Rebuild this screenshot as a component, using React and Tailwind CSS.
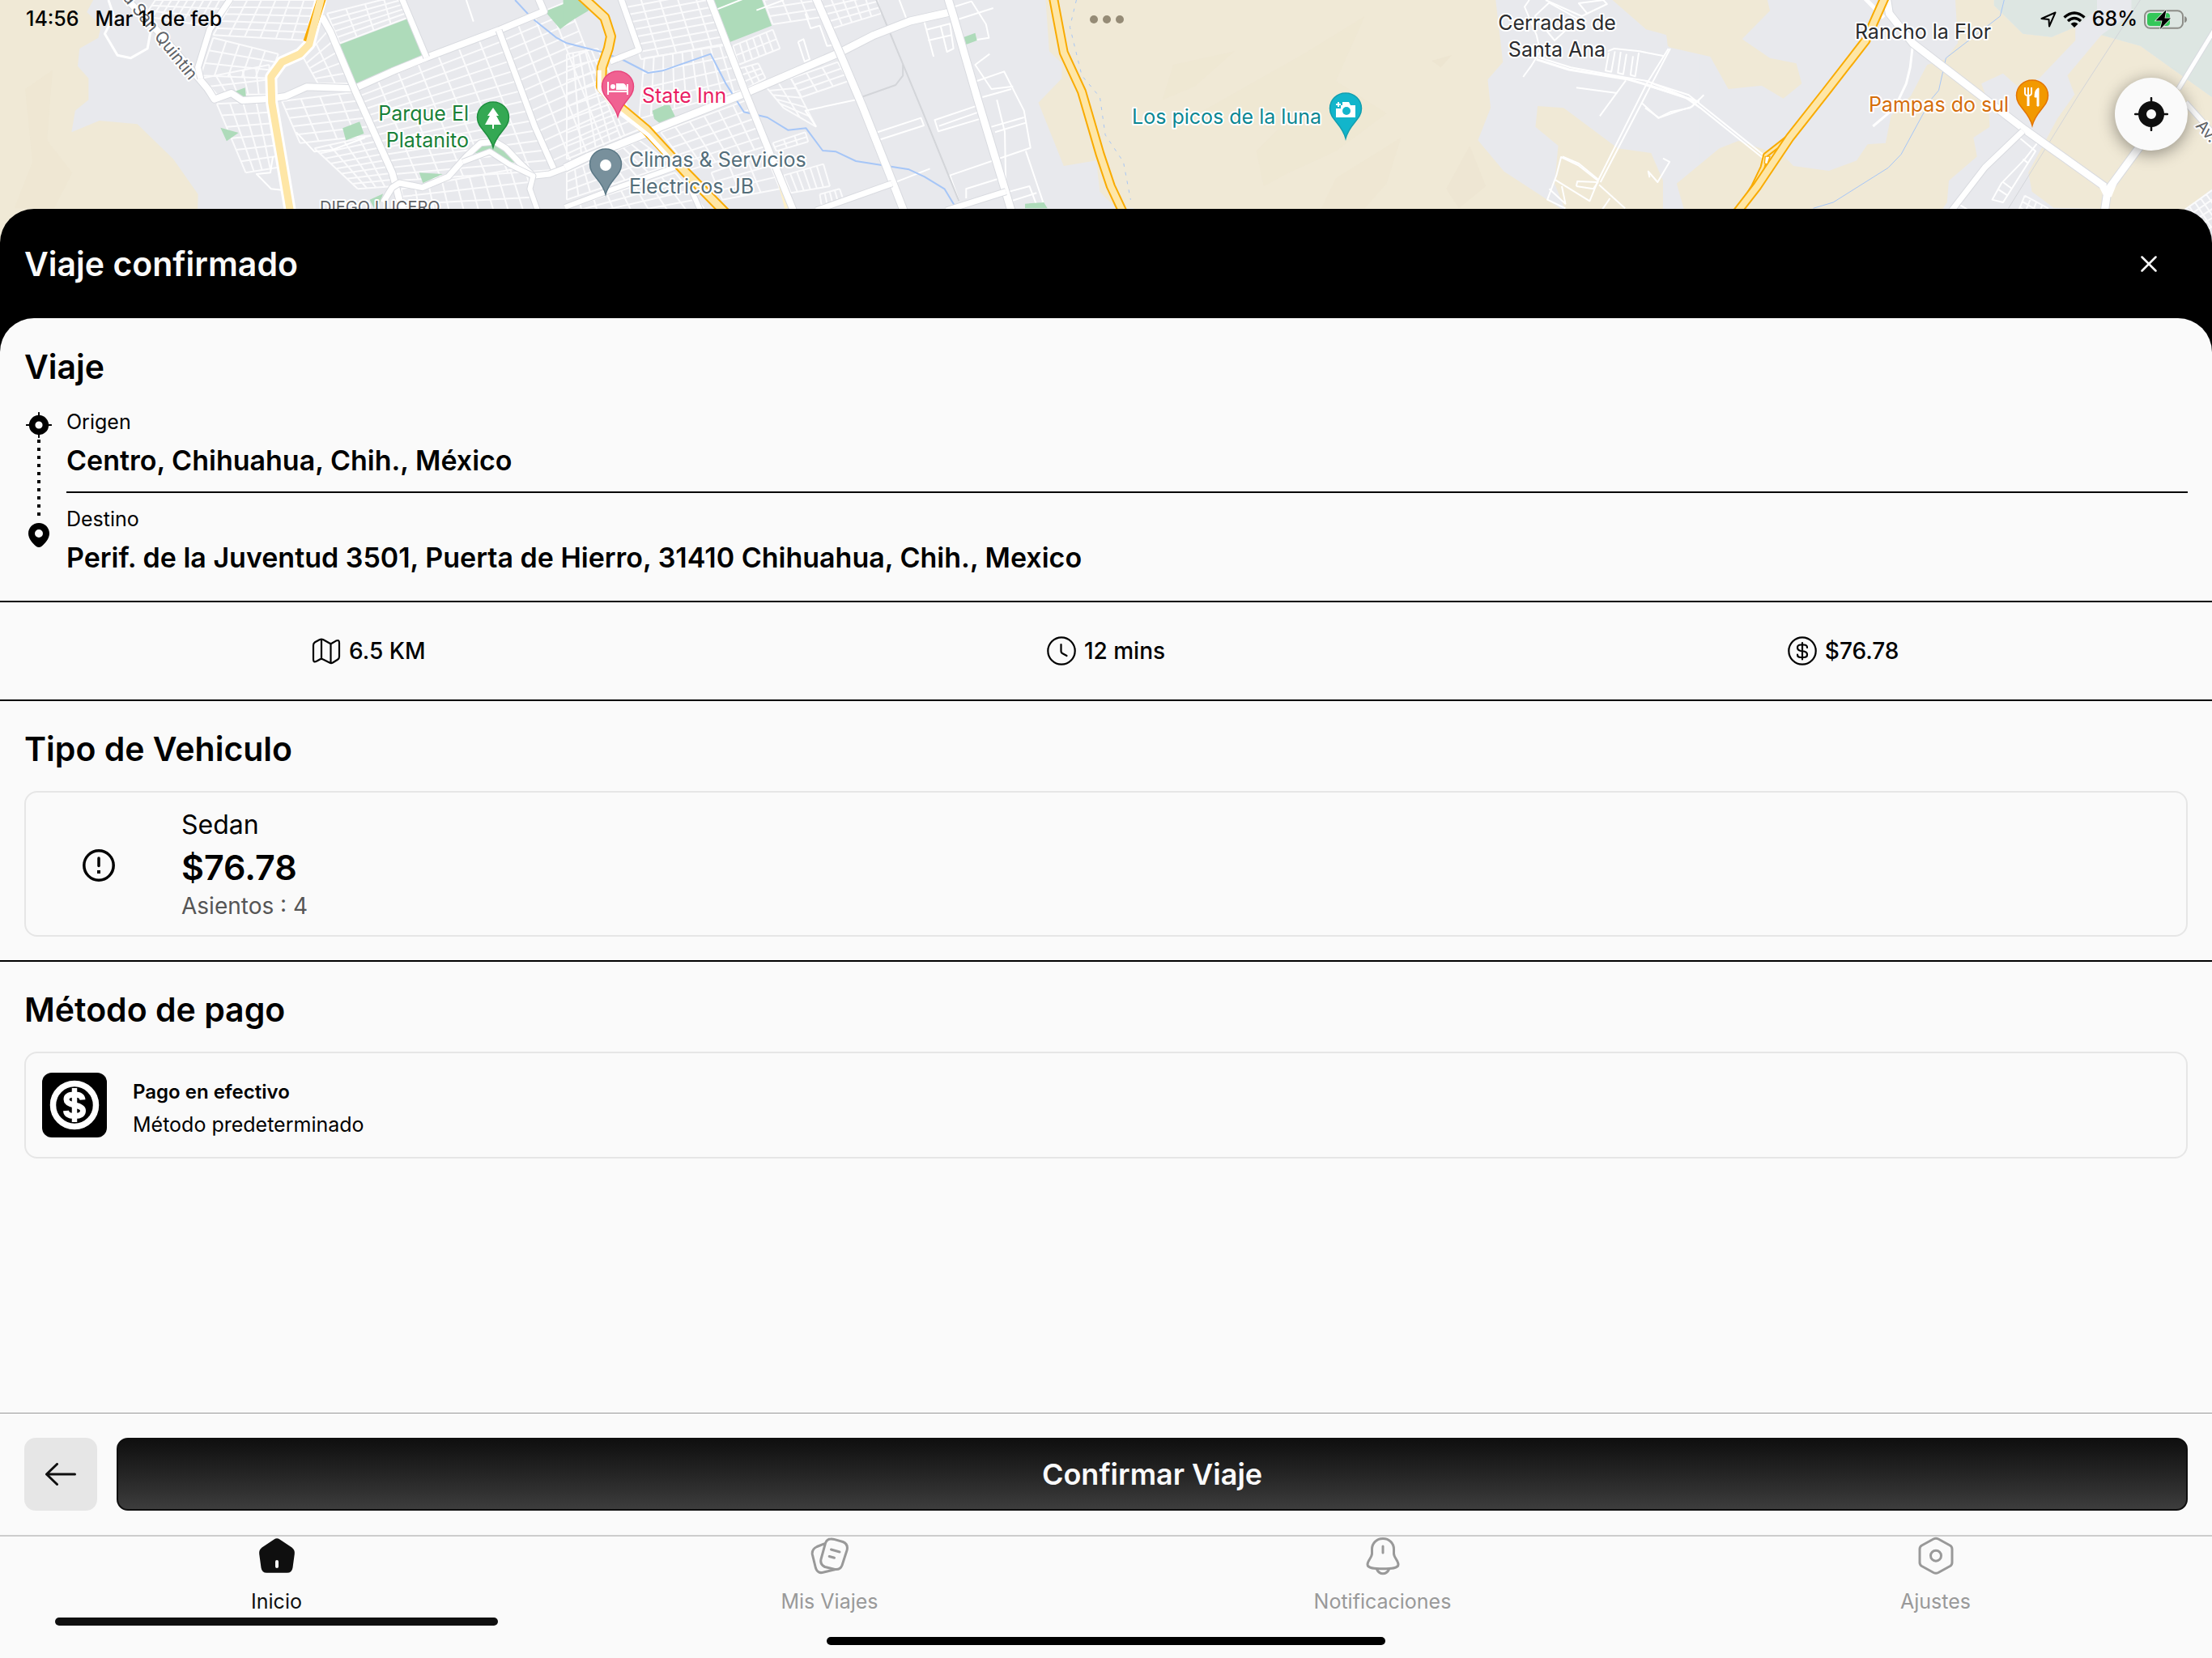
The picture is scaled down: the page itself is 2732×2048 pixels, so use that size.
import React, { useState } from 'react';

/* ---------- Map ---------- */

// Streets inside a four-cornered block, corners given clockwise
const StreetGrid = ({ corners, cols, rows, width = 2 }) => {
    const [a, b, c, d] = corners;
    const mix = (p, q, t) => [p[0] + (q[0] - p[0]) * t, p[1] + (q[1] - p[1]) * t];
    let path = '';
    for (let i = 0; i <= cols; i++) {
        path += `M${mix(a, b, i / cols)}L${mix(d, c, i / cols)}`;
    }
    for (let i = 0; i <= rows; i++) {
        path += `M${mix(a, d, i / rows)}L${mix(b, c, i / rows)}`;
    }
    return <path d={path} stroke="#fbfbfc" strokeWidth={width} fill="none" vectorEffect="non-scaling-stroke" />;
};

const Line = ({ points, color = '#ffffff', width = 2, dash }) => (
    <polyline
        points={points}
        fill="none"
        stroke={color}
        strokeWidth={width}
        strokeDasharray={dash}
        strokeLinejoin="round"
        vectorEffect="non-scaling-stroke"
    />
);

const Road = ({ points, width = 8 }) => (
    <>
        <Line points={points} color="#d9dbe0" width={width + 2} />
        <Line points={points} width={width} />
    </>
);

const Highway = ({ points, width = 9, edge = '#f9ab00' }) => (
    <>
        <Line points={points} color={edge} width={width + 4} />
        <Line points={points} color="#fee6a6" width={width} />
    </>
);

const BEIGE = '#f0e9d6';
const GREEN = '#aedbba';
const WATER = '#a6c6f7';

const pins = [
    { x: 609, y: 125, fill: '#34a853', stroke: '#1e8e3e', icon: 'tree' },
    { x: 763, y: 87, fill: '#f06292', stroke: '#e8457c', icon: 'bed' },
    { x: 748, y: 183, fill: '#78909c', stroke: '#5b7886', icon: 'dot' },
    { x: 1662, y: 114, fill: '#12b5cb', stroke: '#129eaf', icon: 'camera' },
    { x: 2510, y: 98, fill: '#f29900', stroke: '#e37400', icon: 'food' },
];

const labels = [
    { x: 579, y: 149, text: 'Parque El', color: '#188038', anchor: 'end' },
    { x: 579, y: 182, text: 'Platanito', color: '#188038', anchor: 'end' },
    { x: 793, y: 127, text: 'State Inn', color: '#e91e63', anchor: 'start' },
    { x: 777, y: 206, text: 'Climas & Servicios', color: '#546e7a', anchor: 'start' },
    { x: 777, y: 239, text: 'Electricos JB', color: '#546e7a', anchor: 'start' },
    { x: 1632, y: 153, text: 'Los picos de la luna', color: '#0b8793', anchor: 'end' },
    { x: 1923, y: 37, text: 'Cerradas de', color: '#2a2b2e', anchor: 'middle' },
    { x: 1923, y: 70, text: 'Santa Ana', color: '#2a2b2e', anchor: 'middle' },
    { x: 2375, y: 48, text: 'Rancho la Flor', color: '#2a2b2e', anchor: 'middle' },
    { x: 2481, y: 138, text: 'Pampas do sul', color: '#d56e0c', anchor: 'end' },
];

const Pin = ({ x, y, fill, stroke, icon }) => (
    <g transform={`translate(${x} ${y})`}>
        <path d="M0 1C-11 1 -19.500 9.500 -19.500 20C-19.500 34 -5 38 0 57C5 38 19.500 34 19.500 20C19.500 9.500 11 1 0 1Z" fill={fill} stroke={stroke} strokeWidth="1.500" />
        {icon === 'tree' && <path d="M0 8L-7 18H-4L-10 29H-1V34H1V29H10L4 18H7Z" fill="#fff" />}
        {icon === 'dot' && <circle cx="0" cy="21" r="7" fill="#fff" />}
        {icon === 'bed' && (
            <g fill="#fff">
                <path d="M-13 14H-11V25H11V17H13V30H11V27H-11V30H-13Z" />
                <circle cx="-6" cy="20" r="3" />
                <path d="M-2 16H7Q11 17 11 24H-2Z" />
            </g>
        )}
        {icon === 'camera' && (
            <g>
                <path d="M-4 12H4L6 16H12V31H-12V20H-6V16H-4Z" fill="#fff" />
                <path d="M-9 12V18M-12 15H-6" stroke="#fff" strokeWidth="2" />
                <circle cx="1" cy="23" r="5" fill={fill} />
            </g>
        )}
        {icon === 'food' && (
            <g fill="none" stroke="#fff" strokeWidth="2">
                <path d="M-9 10V17Q-9 20 -5 20Q-1 20 -1 17V10M-5 10V19" />
                <path d="M-5 19V33" strokeWidth="3" />
                <path d="M7 11Q3 13 3 22H6V33H8V11Z" fill="#fff" strokeWidth="1" />
            </g>
        )}
    </g>
);

const CityMap = () => (
    <svg className="block w-full h-[300px]" viewBox="0 0 2732 300" preserveAspectRatio="xMidYMin slice" aria-label="Mapa" role="img">
        <rect width="2732" height="300" fill="#e8e9ed" />

        {/* West side */}
        <g transform="scale(0.4464 0.3333)">
            <polygon points="0,0 258,0 240,45 280,95 272,140 220,180 215,245 245,290 245,370 208,410 198,490 275,447 380,460 480,590 548,720 545,900 0,900" fill={BEIGE} />
            <polygon points="70,330 145,260 130,520 200,640 150,772 40,772 90,600" fill="#ede5d0" opacity="0.5" />
            <StreetGrid corners={[[430, 0], [630, 0], [590, 100], [400, 60]]} cols={9} rows={3} />
            <StreetGrid corners={[[645, 0], [880, 0], [850, 150], [590, 130]]} cols={6} rows={5} />
            <StreetGrid corners={[[590, 140], [770, 200], [745, 290], [555, 280]]} cols={5} rows={3} />
            <StreetGrid corners={[[560, 290], [745, 240], [745, 350], [600, 350]]} cols={5} rows={2} />
            <StreetGrid corners={[[600, 385], [745, 375], [770, 620], [680, 640]]} cols={4} rows={6} />
            <StreetGrid corners={[[905, 50], [1115, -20], [1128, 65], [940, 160]]} cols={4} rows={5} />
            <StreetGrid corners={[[840, 215], [910, 110], [975, 310], [880, 310]]} cols={2} rows={5} />
            <StreetGrid corners={[[780, 375], [990, 340], [1035, 500], [830, 530]]} cols={4} rows={5} />
            <StreetGrid corners={[[870, 550], [1035, 500], [1090, 690], [990, 700]]} cols={4} rows={8} />
            <StreetGrid corners={[[990, 330], [1380, 115], [1530, 630], [1095, 670]]} cols={7} rows={14} />
            <StreetGrid corners={[[1385, 110], [1570, 5], [1720, 520], [1535, 635]]} cols={4} rows={14} />
            <StreetGrid corners={[[1110, 700], [1450, 620], [1490, 786], [1120, 786]]} cols={9} rows={3} />
            <Line points="300,0 315,60 290,125 325,205 362,215 408,180 420,90 400,40" width={3} />
            <Line points="755,580 748,640 710,645 750,700 785,705" />
            <Line points="820,490 870,562 920,555 1010,510" />
            <Line points="1290,0 1310,80" />
            <polygon points="940,165 1128,70 1175,213 985,318" fill={GREEN} />
            <polygon points="648,340 678,325 681,362 660,358" fill={GREEN} />
            <polygon points="610,473 660,492 627,523" fill={GREEN} />
            <polygon points="948,475 995,451 1007,495 957,520" fill={GREEN} />
            <polygon points="1160,640 1225,645 1170,678" fill={GREEN} />
            <polygon points="1023,740 1060,718 1045,772 1035,772" fill={GREEN} />
            <polygon points="1508,42 1588,0 1628,30 1550,108" fill={GREEN} />
            <Line points="1425,0 1470,65 1540,140 1568,160" color={WATER} />
            <Road points="345,-10 440,120 550,290 575,330 593,368 640,345 670,372 745,366 790,357 848,322 980,328 1085,265 1180,213 1380,112 1505,42 1490,-5" width={8} />
            <Road points="638,-5 605,60 580,110 548,250 555,292" width={7} />
            <Road points="890,60 915,120 980,328 1085,640 1105,740 1120,790" width={8} />
            <Road points="1112,-5 1180,213" width={7} />
            <Road points="1380,112 1430,290 1480,470 1535,635" width={7} />
            <polygon points="1297,572 1310,548 1355,530 1400,555 1440,610 1415,600 1355,558" fill={GREEN} />
            <Road points="1060,750 1085,695 1105,678 1168,695 1240,655 1290,580 1330,530 1370,525 1400,550 1435,600 1475,652 1520,645 1568,620" width={7} />
            <Road points="1280,600 1355,562 1410,610 1475,652 1466,700 1490,790" width={6} />
            <Line points="888,-5 855,165 830,200 780,230 750,285 752,380 775,560 805,800" width={15} />
            <Line points="890,-5 851,155" color="#f9ab00" width={11} />
            <Line points="888,-5 855,165 830,200 780,230 750,285 752,380 775,560 805,800" color="#fee6a6" width={9} />
        </g>

        {/* Downtown */}
        <g transform="translate(700 0) scale(0.4464 0.3333)">
            <polygon points="1325,0 1335,190 1370,235 1370,290 1305,380 1375,615 1465,595 1475,710 1520,772 1580,772 1580,0" fill={BEIGE} />
            <StreetGrid corners={[[155, 0], [395, -60], [450, 160], [205, 220]]} cols={5} rows={8} />
            <StreetGrid corners={[[215, 215], [450, 165], [495, 330], [200, 440]]} cols={9} rows={4} />
            <StreetGrid corners={[[0, 200], [85, 180], [200, 480], [0, 590]]} cols={5} rows={8} />
            <StreetGrid corners={[[0, 640], [200, 520], [290, 610], [0, 740]]} cols={9} rows={3} />
            <StreetGrid corners={[[260, 490], [500, 370], [555, 540], [340, 630]]} cols={6} rows={5} />
            <StreetGrid corners={[[0, 772], [300, 640], [380, 772], [0, 850]]} cols={8} rows={4} />
            <StreetGrid corners={[[460, 170], [570, 110], [590, 180], [475, 240]]} cols={6} rows={2} />
            <StreetGrid corners={[[475, 255], [530, 235], [550, 290], [500, 325]]} cols={3} rows={3} />
            <StreetGrid corners={[[545, 0], [690, -30], [720, 60], [570, 90]]} cols={3} rows={3} />
            <StreetGrid corners={[[700, 0], [850, -40], [870, 50], [735, 105]]} cols={5} rows={4} />
            <StreetGrid corners={[[550, 320], [620, 290], [690, 470], [600, 400]]} cols={2} rows={5} />
            <StreetGrid corners={[[620, 290], [750, 230], [780, 300], [650, 360]]} cols={3} rows={3} />
            <StreetGrid corners={[[600, 650], [710, 608], [728, 690], [620, 715]]} cols={6} rows={1} />
            <StreetGrid corners={[[700, 720], [755, 700], [765, 740], [705, 760]]} cols={4} rows={1} />
            <StreetGrid corners={[[570, 530], [660, 490], [668, 525], [580, 560]]} cols={3} rows={2} />
            <StreetGrid corners={[[400, 640], [550, 570], [590, 700], [430, 740]]} cols={3} rows={3} />
            <Line points="985,60 1015,210" />
            <Line points="995,110 1060,88 1070,180 1052,192 1035,100" />
            <Line points="1000,150 1065,130" />
            <Line points="660,50 675,105 700,95 720,170 750,165" />
            <Line points="640,155 655,145 672,220 658,228 640,155" />
            <Line points="1060,30 1120,5 1160,90 1168,140 1120,150" />
            <Line points="1075,75 1180,30" />
            <Line points="920,0 940,70" />
            <Line points="1135,300 1210,265 1265,410 1283,548 1060,650 1085,745" />
            <Line points="1170,200 1130,240 1175,330 1235,320" />
            <Line points="1175,470 1265,435" />
            <Line points="1185,490 1270,455" />
            <Line points="1150,360 1230,330" />
            <Line points="1190,370 1212,490 1215,710" />
            <Line points="1270,560 1318,750 1300,760 1280,690 1225,710" />
            <Line points="1105,735 1105,700 1200,660" />
            <Line points="1230,745 1300,715" />
            <Line points="860,490 980,437 988,465 868,517" />
            <Line points="1135,392 1018,445 1028,487 1145,440" />
            <Line points="1030,467 1140,415" />
            <Line points="690,470 660,410 800,370" />
            <Line points="900,680 1005,625" />
            <Line points="580,620 610,772" color="#fdf0c8" width={6} />
            <Line points="855,-5 985,415 1085,745" color="#d3d5d9" />
            <Line points="930,240 930,280 910,315 815,360" color="#d3d5d9" />
            <polygon points="405,0 540,0 567,95 450,157" fill={GREEN} />
            <polygon points="1098,138 1130,122 1135,150 1105,165" fill={GREEN} />
            <polygon points="237,410 270,390 285,390 302,438 265,465 242,440" fill={GREEN} />
            <polygon points="-10,0 55,-10 60,40 -10,95" fill={GREEN} />
            <polygon points="1268,755 1320,750 1330,772 1268,772" fill={GREEN} />
            <Line points="415,35 490,-5" />
            <Line points="525,38 600,0" />
            <Line points="0,160 95,192 160,225 225,270 265,262 398,200 440,310 490,415 555,435 612,482 662,475 708,558 745,562 800,597 947,628 990,655 1045,700 1072,760" color={WATER} />
            <Line points="1410,0 1392,100 1425,280 1475,360 1490,500 1540,600 1560,740" color={WATER} width={1} dash="4 7" />
            <Road points="150,-5 200,185 120,228" width={7} />
            <Road points="-5,622 60,580 210,500 260,470 495,345 755,195 850,130 950,78 1060,45" width={9} />
            <Road points="395,-5 495,345 560,560 630,790" width={8} />
            <Road points="690,-5 755,195 820,400 900,670 935,790" width={9} />
            <Road points="1055,-5 1070,60 1135,360 1180,560 1232,790" width={9} />
            <Road points="-5,768 110,710 320,610" width={6} />
            <Road points="340,690 370,780" width={6} />
            <Road points="690,780 900,680" width={7} />
            <Road points="1050,780 1215,710" width={7} />
            <Highway points="40,-15 105,65 122,135 115,180 97,250 95,320 140,390 220,480 330,640 440,790" />
            <Line points="90,260 90,330 140,410 225,500 280,580" width={5} />
            <Highway points="1346,-10 1375,195 1425,340 1475,570 1505,690 1540,790" width={8} />
        </g>

        {/* Hills and Santa Ana */}
        <g transform="translate(1400 0) scale(0.4464 0.3333)">
            <rect x="0" y="0" width="1568" height="800" fill={BEIGE} />
            <polygon points="180,420 470,200 640,60 560,300 700,420 560,560 430,640 360,690 340,560 400,480" fill="#ede5d0" opacity="0.4" />
            <polygon points="560,660 740,510 700,680 640,772 520,772" fill="#ede5d0" opacity="0.5" />
            <polygon points="825,225 880,205 850,250" fill="#ebe3cf" opacity="0.7" />
            <polygon points="865,700 930,540 975,690 900,772" fill="#ede5d0" opacity="0.6" />
            <polygon points="80,370 110,240 280,190 170,320" fill="#ede5d0" opacity="0.4" />
            <polygon
                points="1002,0 1325,0 1415,105 1475,130 1478,170 1568,200 1568,610 1505,680 1525,780 1465,780 1465,670 1432,567 1340,550 1190,400 1118,393 1112,470 1175,540 1165,680 1195,780 1180,772 1145,740 1025,635 953,520 988,400 980,295 1022,230"
                fill="#e8e9ed"
            />
            <Line points="1095,0 1082,25 1115,130 1125,190 1100,245 1078,285" />
            <Line points="1110,60 1150,10 1190,40 1230,70 1165,150 1110,60" />
            <Line points="1140,0 1240,60 1310,15 1300,0 1232,12 1255,50" />
            <Line points="1115,220 1205,258 1365,293 1430,318 1568,380" width={3} />
            <Line points="1120,212 1210,250 1365,288 1420,300 1520,355 1568,400" />
            <Line points="1312,190 1330,180 1400,190 1468,208" />
            <Line points="1315,195 1306,262 1322,266 1332,190" />
            <Line points="1348,192 1340,270 1355,275 1364,200" />
            <Line points="1382,208 1375,278 1388,283 1398,195" />
            <Line points="1480,180 1420,310 1285,670" width={2} />
            <Line points="1485,180 1430,320 1292,675" width={2} />
            <Line points="1225,325 1338,345" />
            <Line points="1362,298 1290,430" />
            <Line points="1405,380 1452,437 1485,415 1540,400 1568,365" />
            <Line points="1195,772 1145,740 1170,650 1183,582 1230,612 1285,670 1262,745 1165,665" />
            <Line points="1187,580 1232,606 1288,668" />
            <Line points="1225,690 1228,672 1285,675 1272,700 1225,690" />
            <Line points="1288,685 1360,772" />
            <Line points="1318,735 1295,780" />
            <Line points="1150,700 1195,755 1185,690" />
            <Line points="1465,587 1483,600 1450,675 1424,635 1428,658" />
        </g>

        {/* East side */}
        <g transform="translate(2032 0) scale(0.4464 0.3333)">
            <rect x="150" y="0" width="1420" height="900" fill="#e8e9ed" />
            <polygon points="0,0 338,0 345,40 268,145 345,215 418,235 433,310 382,365 322,317 230,330 180,210 65,175 58,128 0,108" fill={BEIGE} />
            <polygon
                points="258,522 205,550 87,680 108,780 820,780 835,750 840,670 918,580 908,510 953,470 950,385 930,310 990,272 1030,320 1090,290 1190,150 1190,100 1125,137 1045,125 965,20 965,0 858,0 865,160 830,220 780,240 735,355 680,430 665,530 615,535 585,595 508,633 410,615 385,580"
                fill={BEIGE}
            />
            <polygon points="1262,130 1370,170 1568,360 1568,700 1490,780 1130,770 1070,710 1060,640 1140,440 1188,350 1168,280" fill={BEIGE} />
            <polygon points="965,-5 1250,-5 1250,35 1190,100 1125,137 1045,125 965,20" fill="#dde6e2" />
            <polygon points="1345,-5 1568,-5 1568,360 1370,170 1262,130 1345,50" fill="#dde6e2" />
            <Line points="993,0 982,60 832,215 812,335 790,370 708,572 672,622 520,750 465,772" color={WATER} width={1} />
            <Line points="1372,-5 1200,350 1005,772" color="#d3d5d9" width={1} />
            <Line points="740,170 733,250 722,310 690,400 630,468" width={3} />
            <Line points="0,300 120,352 325,572" />
            <Line points="0,315 120,365 325,585" />
            <Line points="0,400 38,437 95,410 130,395 162,352" />
            <Line points="1035,510 1080,560 990,750 960,740 985,680 1050,590 1085,530" />
            <Line points="975,700 1003,725" />
            <Line points="990,675 1015,700" />
            <Line points="1045,590 1060,605" />
            <StreetGrid corners={[[1050, 725], [1115, 772], [1090, 850], [1030, 790]]} cols={4} rows={3} />
            <StreetGrid corners={[[1490, 780], [1568, 705], [1620, 800], [1530, 870]]} cols={5} rows={4} />
            <Line points="865,755 890,775" />
            <Line points="605,-10 660,65" width={5} />
            <Road points="668,-10 675,50 740,160 1050,480 1280,700 1270,790" width={9} />
            <Road points="1045,485 940,620 848,780" width={7} />
            <Road points="1285,695 1370,540 1400,480" width={9} />
            <Road points="1475,330 1575,110" width={5} />
            <Road points="1495,380 1575,500" width={6} />
            <polygon points="1255,690 1280,688 1305,680 1290,730 1270,730" fill="#fff" />
            <Highway points="400,505 333,575 325,620 300,690 262,772" width={3} />
            <Highway points="663,-10 610,150 500,340 400,510 355,600 310,690 255,785" width={8} />
            <polygon points="332,580 345,580 338,608 330,605" fill="#fff" stroke="#f9ab00" strokeWidth="3" />
        </g>

        {/* Place names */}
        <g fontFamily="Inter, 'Liberation Sans', sans-serif" fontSize="25" stroke="#fff" strokeWidth="4" strokeLinejoin="round" paintOrder="stroke">
            {labels.map((label) => (
                <text key={label.text} x={label.x} y={label.y} fill={label.color} textAnchor={label.anchor}>
                    {label.text}
                </text>
            ))}
            <text x="395" y="263" fill="#5f6368" fontSize="20">DIEGO LUCERO</text>
            <text transform="translate(234 100) rotate(51)" textAnchor="end" fill="#5f6368" fontSize="21">nia San Quintin</text>
            <text transform="translate(2711 156) rotate(48)" fill="#5f6368" fontSize="20">Av.</text>
        </g>
        {pins.map((pin) => (
            <Pin key={pin.icon} {...pin} />
        ))}
    </svg>
);

/* ---------- Icons ---------- */

const CrosshairIcon = ({ className }) => (
    <svg className={className} viewBox="0 0 42 42" fill="none" stroke="currentColor" aria-hidden="true">
        <circle cx="21" cy="21" r="11" strokeWidth="10" />
        <path d="M21 1V8M21 34V41M1 21H8M34 21H41" strokeWidth="2.500" strokeLinecap="round" />
    </svg>
);

const MarkerIcon = () => (
    <svg className="w-7 h-8" viewBox="0 0 28 32" aria-hidden="true">
        <path fillRule="evenodd" d="M14 1C6.500 1 1 6.800 1 14C1 20 6 26 10.500 29.800Q14 32.200 17.500 29.800C22 26 27 20 27 14C27 6.800 21.500 1 14 1ZM14 9A5 5 0 1 1 14 19A5 5 0 1 1 14 9Z" />
    </svg>
);

const FoldedMapIcon = () => (
    <svg className="w-9 h-9" viewBox="0 0 36 36" fill="none" stroke="currentColor" strokeWidth="2.200" strokeLinejoin="round" aria-hidden="true">
        <path d="M2 11Q2 8.500 4 7.300L10 4Q12 3 14 4L22 8.500Q23.500 9.300 25 8.500L30 5.600Q34 3.600 34 8V25Q34 27.500 32 28.700L26 32.500Q24 33.600 22 32.500L13.500 28.300Q12 27.500 10.500 28.300L6 30.800Q2 32.800 2 28.500Z" />
        <path d="M12 4V28M23.500 9V33" />
    </svg>
);

const ClockIcon = () => (
    <svg className="w-9 h-9" viewBox="0 0 36 36" fill="none" stroke="currentColor" strokeWidth="2.200" strokeLinecap="round" strokeLinejoin="round" aria-hidden="true">
        <circle cx="18" cy="18" r="16.700" />
        <path d="M17.500 10V18.500Q17.500 20 19 21L24.500 24" />
    </svg>
);

const DollarIcon = () => (
    <svg className="w-9 h-9" viewBox="0 0 36 36" fill="none" stroke="currentColor" strokeWidth="2.200" strokeLinecap="round" aria-hidden="true">
        <circle cx="18" cy="18" r="16.700" />
        <path d="M24 14Q24 10.500 20 10.500H16Q12 10.500 12 14Q12 17 16 18L20 18.500Q24 19.500 24 22.500Q24 26 20 26H16Q12 26 12 22.500M18 8V28.500" />
    </svg>
);

const InfoIcon = () => (
    <svg className="w-10 h-10" viewBox="0 0 40 40" fill="none" stroke="currentColor" strokeWidth="3.500" aria-hidden="true">
        <circle cx="20" cy="20" r="18.200" />
        <path d="M20 11V20.500" strokeLinecap="round" />
        <path d="M18 28H22" strokeWidth="4" />
    </svg>
);

const CashIcon = () => (
    <svg className="w-20 h-20" viewBox="0 0 80 80" fill="none" stroke="#fff" aria-hidden="true">
        <rect width="80" height="80" rx="12" fill="#000" stroke="none" />
        <circle cx="40" cy="40" r="26.500" strokeWidth="7.500" />
        <path d="M50 33.500Q49.500 27 40 27Q30 27 30 33Q30 38 40 40Q50.500 42 50.500 47Q50.500 53.500 40 53.500Q30 53.500 29.500 47" strokeWidth="7" />
        <path d="M40 19V61" strokeWidth="6.500" />
    </svg>
);

const navIconProps = {
    className: 'w-12 h-12',
    viewBox: '0 0 48 48',
    fill: 'none',
    stroke: 'currentColor',
    strokeWidth: 3,
    strokeLinecap: 'round',
    strokeLinejoin: 'round',
    'aria-hidden': true,
};

const HomeIcon = () => (
    <svg {...navIconProps}>
        <path d="M20.500 3.400Q24 1 27.500 3.400L42.500 13.500Q46.500 16.500 45.800 21.500L43.500 38.500Q42.500 44.800 36.500 44.800H11.500Q5.500 44.800 4.500 38.500L2.200 21.500Q1.500 16.500 5.500 13.500Z" fill="currentColor" stroke="none" />
        <path d="M24 31V37" stroke="#fafafa" strokeWidth="4" />
    </svg>
);

const TripsIcon = () => (
    <svg {...navIconProps}>
        <path d="M25 3Q20.500 3 18.500 8L13 28Q11.500 35 18 37.500L29 40.200Q36.500 42 39 35.500L45 17Q47 9.500 40 6.500L30 3.600Q27.500 2.900 25 3Z" />
        <path d="M17 9L8 12.500Q1.500 15.500 2.300 22L6.500 39Q9 46 15.500 44.300L31 40.500" />
        <path d="M25.500 16L36 19M23.200 24.500L29.500 26.300" strokeWidth="3" />
    </svg>
);

const BellIcon = () => (
    <svg {...navIconProps}>
        <path d="M24 2.500C16 2.500 10.500 8.500 10.500 15.500V21C10.500 26 5 29.500 5 34.500C5 39.500 14 39.700 24 39.700C34 39.700 43 39.500 43 34.500C43 29.500 37.500 26 37.500 21V15.500C37.500 8.500 32 2.500 24 2.500Z" />
        <path d="M16.500 40.500Q19 45.800 24 45.800Q29 45.800 31.500 40.500M24 12V20" />
    </svg>
);

const SettingsIcon = () => (
    <svg {...navIconProps}>
        <path d="M21 3Q24 1.500 27 3L41.500 11Q44 12.500 44 15.500V32Q44 35 41.500 36.500L27 44.500Q24 46 21 44.500L6.500 36.500Q4 35 4 32V15.500Q4 12.500 6.500 11Z" />
        <circle cx="24" cy="23.700" r="6.500" />
    </svg>
);

const StatusIcons = () => (
    <>
        <svg className="w-5 h-5" viewBox="0 0 20 20" fill="none" stroke="#000" strokeWidth="2" strokeLinejoin="round" aria-hidden="true">
            <path d="M18.500 1.500L1.500 9L10.500 10L11 18.500Z" />
        </svg>
        <svg className="w-7 h-5" viewBox="0 0 28 20" fill="none" stroke="#000" strokeWidth="3.500" aria-hidden="true">
            <path d="M1.500 7.500Q14 -3.500 26.500 7.500M6 12Q14 5 22 12" />
            <path d="M14 20L9.500 15.500Q14 11.500 18.500 15.500Z" fill="#000" stroke="none" />
        </svg>
    </>
);

const BatteryIcon = () => (
    <svg className="w-[54px] h-6" viewBox="0 0 54 24" aria-label="Batería" role="img">
        <rect x="1" y="1.200" width="47" height="21.600" rx="6.500" fill="none" stroke="#8d8d88" strokeWidth="2" />
        <path d="M50 8Q53 9 53 12Q53 15 50 16Z" fill="#8d8d88" />
        <rect x="4" y="4" width="28" height="16" rx="4" fill="#34c759" />
        <path d="M27.500 0L14.500 13.500H22.500L20 24L33 10.500H25.500Z" fill="#000" stroke="#e6ece8" strokeWidth="1.500" paintOrder="stroke" />
    </svg>
);

/* ---------- Screen ---------- */

const stats = [
    { id: 'distance', icon: FoldedMapIcon, value: '6.5 KM' },
    { id: 'time', icon: ClockIcon, value: '12 mins' },
    { id: 'price', icon: DollarIcon, value: '$76.78' },
];

const tabs = [
    { id: 'home', name: 'Inicio', icon: HomeIcon },
    { id: 'trips', name: 'Mis Viajes', icon: TripsIcon },
    { id: 'notifications', name: 'Notificaciones', icon: BellIcon },
    { id: 'settings', name: 'Ajustes', icon: SettingsIcon },
];

const App = () => {
    const [activeTab, setActiveTab] = useState('home');

    return (
        <div className="min-h-screen flex flex-col bg-[#fafafa] text-black font-['Inter','Liberation_Sans',sans-serif]">

            {/* Map */}
            <div className="relative">
                <CityMap />
                <div className="absolute inset-x-0 top-0 grid grid-cols-3 items-center h-12 pl-8 pr-[30px] text-[25px] font-medium">
                    <div className="flex gap-5">
                        <span>14:56</span>
                        <span>Mar 11 de feb</span>
                    </div>
                    <div className="flex justify-center gap-1.5">
                        <span className="w-2.5 h-2.5 rounded-full bg-[#958b76]"></span>
                        <span className="w-2.5 h-2.5 rounded-full bg-[#958b76]"></span>
                        <span className="w-2.5 h-2.5 rounded-full bg-[#958b76]"></span>
                    </div>
                    <div className="flex justify-end items-center gap-2">
                        <StatusIcons />
                        <span>68%</span>
                        <BatteryIcon />
                    </div>
                </div>
                <button
                    type="button"
                    aria-label="Mi ubicación"
                    className="absolute right-[30px] top-24 w-[90px] h-[90px] rounded-full bg-[#fafafa] text-[#0f0f0f] flex items-center justify-center shadow-[0_4px_20px_rgba(0,0,0,0.4)]"
                >
                    <CrosshairIcon className="w-[42px] h-[42px]" />
                </button>
            </div>

            {/* Sheet */}
            <main className="relative -mt-[42px] flex-1 flex flex-col bg-black rounded-t-[42px]">
                <header className="flex items-center justify-between h-[135px] pl-[30px] pr-[62px]">
                    <h1 className="text-[41px] leading-[56px] font-semibold text-[#fafafa]">Viaje confirmado</h1>
                    <button type="button" aria-label="Cerrar" className="p-1.5 text-white">
                        <svg className="w-5 h-5" viewBox="0 0 20 20" stroke="currentColor" strokeWidth="2.500" strokeLinecap="round" aria-hidden="true">
                            <path d="M1.500 1.500L18.500 18.500M18.500 1.500L1.500 18.500" />
                        </svg>
                    </button>
                </header>

                <div className="flex-1 bg-[#fafafa] rounded-t-[42px]">
                    {/* Route */}
                    <section className="px-[30px] pt-8 pb-[29px] border-b-2 border-black">
                        <h2 className="text-[41px] leading-[56px] font-semibold">Viaje</h2>
                        <div className="flex gap-4 mt-6">
                            <div className="flex flex-col items-center w-9 pt-1">
                                <CrosshairIcon className="w-8 h-8" />
                                <div className="w-1 h-[94px] mt-0.5 bg-[repeating-linear-gradient(to_bottom,#000_0_4px,transparent_4px_10px)]"></div>
                                <div className="mt-2">
                                    <MarkerIcon />
                                </div>
                            </div>
                            <div className="flex-1">
                                <div className="pb-3.5 border-b-2 border-black">
                                    <p className="text-[25px] leading-8">Origen</p>
                                    <p className="mt-2 text-[34px] leading-[48px] font-semibold">Centro, Chihuahua, Chih., México</p>
                                </div>
                                <div className="pt-4">
                                    <p className="text-[25px] leading-8">Destino</p>
                                    <p className="mt-2 text-[34px] leading-[48px] font-semibold">
                                        Perif. de la Juventud 3501, Puerta de Hierro, 31410 Chihuahua, Chih., Mexico
                                    </p>
                                </div>
                            </div>
                        </div>
                    </section>

                    {/* Trip numbers */}
                    <section className="grid grid-cols-3 h-[122px] border-b-2 border-black">
                        {stats.map(({ id, icon: Icon, value }) => (
                            <div key={id} className="flex items-center justify-center gap-2.5 text-[28px] font-medium">
                                <Icon />
                                <span>{value}</span>
                            </div>
                        ))}
                    </section>

                    {/* Vehicle */}
                    <section className="px-[30px] pt-[31px] pb-[29px] border-b-2 border-black">
                        <h2 className="text-[41px] leading-[56px] font-semibold">Tipo de Vehiculo</h2>
                        <div className="mt-6 flex items-center gap-3 pt-5 pb-4 border-2 border-[#e6e6e6] rounded-2xl">
                            <div className="flex justify-center w-[180px]">
                                <InfoIcon />
                            </div>
                            <div>
                                <p className="text-[32px] leading-10">Sedan</p>
                                <p className="mt-1 text-[43px] leading-[56px] font-semibold">$76.78</p>
                                <p className="text-[28px] leading-10 text-[#555555]">Asientos : 4</p>
                            </div>
                        </div>
                    </section>

                    {/* Payment */}
                    <section className="px-[30px] pt-[31px]">
                        <h2 className="text-[41px] leading-[56px] font-semibold">Método de pago</h2>
                        <div className="mt-6 flex gap-8 px-5 pt-6 pb-5 border-2 border-[#e6e6e6] rounded-2xl">
                            <CashIcon />
                            <div className="pt-1">
                                <p className="text-2xl leading-10 font-semibold">Pago en efectivo</p>
                                <p className="text-[25px] leading-10">Método predeterminado</p>
                            </div>
                        </div>
                    </section>
                </div>
            </main>

            {/* Actions */}
            <div className="flex gap-6 px-[30px] py-[30px] border-t border-[#999999]">
                <button type="button" aria-label="Volver" className="flex items-center justify-center w-[90px] h-[90px] rounded-[14px] bg-[#e6e6e6] text-[#0f0f0f]">
                    <svg className="w-10 h-7" viewBox="0 0 40 28" fill="none" stroke="currentColor" strokeWidth="3" strokeLinecap="round" strokeLinejoin="round" aria-hidden="true">
                        <path d="M15.500 1.500L2.500 14L15.500 26.500M2.500 14H37.500" />
                    </svg>
                </button>
                <button type="button" className="flex-1 h-[90px] rounded-[14px] border-2 border-[#0f0f0f] bg-linear-to-b from-[#0f0f0f] to-[#3d3d3d] text-[#fafafa] text-[36px] font-semibold">
                    Confirmar Viaje
                </button>
            </div>

            {/* Bottom navigation */}
            <footer className="border-t-2 border-[#cccccc] pb-4">
                <nav className="grid grid-cols-4">
                    {tabs.map(({ id, name, icon: Icon }) => (
                        <button
                            key={id}
                            type="button"
                            onClick={() => setActiveTab(id)}
                            className={`flex flex-col items-center ${activeTab === id ? 'text-[#0f0f0f]' : 'text-[#999999]'}`}
                        >
                            <Icon />
                            <span className="mt-4 text-[25px] leading-8">{name}</span>
                            <span className={`mt-1 h-2.5 w-4/5 rounded-full ${activeTab === id ? 'bg-[#0f0f0f]' : 'bg-transparent'}`}></span>
                        </button>
                    ))}
                </nav>
                <div className="mt-3.5 mx-auto h-2.5 w-[690px] max-w-full rounded-full bg-black"></div>
            </footer>
        </div>
    );
};

export default App;
